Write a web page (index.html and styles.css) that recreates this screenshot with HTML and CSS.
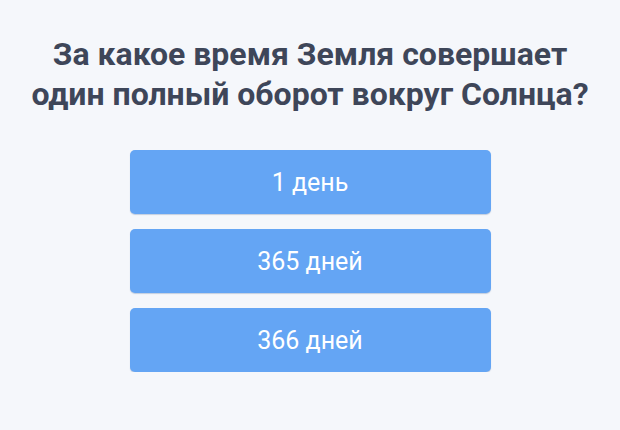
FILE: index.html
```html
<!DOCTYPE html>
<html lang="ru">
<head>
    <meta charset="UTF-8">
    <meta name="viewport" content="width=device-width, initial-scale=1.0">
    <title>Викторина</title>
    <link rel="stylesheet" href="styles.css">
</head>
<body>
    <div class="quiz">
        <h1 class="question">За какое время Земля совершает один полный оборот вокруг Солнца?</h1>
        <div class="answers">
            <button class="answer">1 день</button>
            <button class="answer">365 дней</button>
            <button class="answer">366 дней</button>
        </div>
    </div>
</body>
</html>
```

FILE: styles.css
```css
body {
    margin: 0;
    background-color: #f5f7fb;
    font-family: Roboto, "Liberation Sans", sans-serif;
}
.quiz {
    display: flex;
    flex-direction: column;
    align-items: center;
    padding-top: 34px;
}
.question {
    margin: 0;
    width: 580px;
    text-align: center;
    font-size: 32px;
    font-weight: 700;
    line-height: 40px;
    color: #3e4659;
}
.answers {
    display: flex;
    flex-direction: column;
    gap: 15px;
    margin-top: 36px;
}
.answer {
    width: 361px;
    height: 64px;
    border: none;
    border-radius: 5px;
    background-color: #64a5f4;
    box-shadow: 0 1px 1px rgba(40, 80, 140, 0.25);
    color: #fff;
    font-family: Roboto, "Liberation Sans", sans-serif;
    font-size: 25px;
    cursor: pointer;
}
```
